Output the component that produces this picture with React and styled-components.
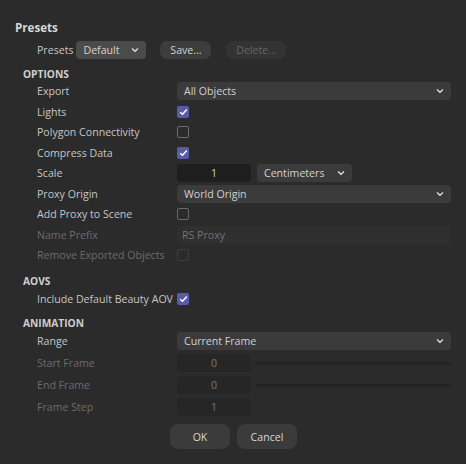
import React from 'react';
import styled, { createGlobalStyle } from 'styled-components';

const Global = createGlobalStyle`
  html, body {
    margin: 0;
    padding: 0;
    background: #2b2b2b;
  }
  body {
    font-family: "Open Sans", "Noto Sans", sans-serif;
    font-size: 10.6px;
    color: #c8c8c8;
  }
`;

const Dialog = styled.div`
  width: 466px;
  height: 464px;
  box-sizing: border-box;
  padding: 20px 15px 0 15px;
  display: flex;
  flex-direction: column;
`;

const Title = styled.div`
  font-weight: 700;
  font-size: 11.6px;
  color: #d6d6d6;
  height: 16px;
  line-height: 16px;
`;

const SectionHead = styled.div`
  font-weight: 700;
  font-size: 10.2px;
  color: #cfcfcf;
  margin-left: 8px;
  height: 14px;
  line-height: 14px;
  margin-top: ${p => p.top}px;
  margin-bottom: ${p => p.bottom}px;
`;

const Rows = styled.div`
  display: flex;
  flex-direction: column;
  gap: ${p => p.gap}px;
`;

const Row = styled.div`
  display: grid;
  grid-template-columns: 140px 1fr;
  align-items: center;
  height: 18px;
  padding-left: 22px;
`;

const Label = styled.div`
  color: ${p => (p.dim ? '#6c6c6c' : '#c6c6c6')};
  white-space: nowrap;
`;

const Control = styled.div`
  display: flex;
  align-items: center;
  gap: 6px;
  height: 18px;
`;

const Select = styled.div`
  display: flex;
  align-items: center;
  justify-content: space-between;
  box-sizing: border-box;
  height: 18px;
  width: ${p => p.width || '100%'};
  padding: 0 7px 0 7px;
  border-radius: 4px;
  background: ${p => p.bg || '#3b3b3b'};
  color: #d2d2d2;
`;

const Chevron = () => (
  <svg width="8" height="6" viewBox="0 0 8 6">
    <path d="M1 1.5 L4 4.3 L7 1.5" fill="none" stroke="#e0e0e0" strokeWidth="1.3" />
  </svg>
);

const Box = styled.div`
  box-sizing: border-box;
  width: 12px;
  height: 12px;
  border-radius: 2px;
  display: flex;
  align-items: center;
  justify-content: center;
  background: ${p => (p.checked ? '#5a5ba6' : 'transparent')};
  border: ${p => (p.checked ? 'none' : `1.5px solid ${p.dim ? '#3e3e3e' : '#6a6a6a'}`)};
`;

const Check = ({ checked, dim }) => (
  <Box checked={checked} dim={dim}>
    {checked && (
      <svg width="9" height="8" viewBox="0 0 9 8">
        <path d="M1.2 4.2 L3.5 6.2 L7.8 1.6" fill="none" stroke="#ffffff" strokeWidth="1.5" />
      </svg>
    )}
  </Box>
);

const NumField = styled.div`
  box-sizing: border-box;
  width: 74px;
  height: 18px;
  border-radius: 4px;
  background: ${p => (p.dim ? '#262626' : '#1e1e1e')};
  color: ${p => (p.dim ? '#777' : '#d0d0d0')};
  text-align: center;
  line-height: 18px;
`;

const TextField = styled.div`
  box-sizing: border-box;
  width: 100%;
  height: 18px;
  border-radius: 4px;
  background: #2f2f2f;
  color: #727272;
  padding-left: 5px;
  line-height: 18px;
`;

const Track = styled.div`
  flex: 1;
  height: 3px;
  border-radius: 2px;
  background: #232323;
  margin-left: -2px;
`;

const PresetRow = styled.div`
  display: flex;
  align-items: center;
  height: 18px;
  margin-top: 5px;
  padding-left: 22px;
`;

const PresetLabel = styled.div`
  margin-right: 3px;
  color: #c6c6c6;
`;

const Pill = styled.div`
  box-sizing: border-box;
  height: 18px;
  width: ${p => p.width}px;
  margin-left: ${p => p.gap || 0}px;
  border-radius: 7px;
  background: ${p => (p.disabled ? '#333333' : '#3d3d3d')};
  color: ${p => (p.disabled ? '#666' : '#d2d2d2')};
  display: flex;
  align-items: center;
  justify-content: center;
`;

const Footer = styled.div`
  display: flex;
  justify-content: center;
  gap: 7px;
  margin-top: 8px;
  padding-left: 1px;
`;

const Button = styled.div`
  width: 60px;
  height: 25px;
  border-radius: 8px;
  background: #3b3b3b;
  color: #d6d6d6;
  display: flex;
  align-items: center;
  justify-content: center;
`;

export default function App() {
  return (
    <Dialog>
      <Global />
      <Title>Presets</Title>
      <PresetRow>
        <PresetLabel>Presets</PresetLabel>
        <Select width="70px" bg="#4b4b4b">
          Default <Chevron />
        </Select>
        <Pill width={51} gap={14}>Save...</Pill>
        <Pill width={60} gap={15} disabled>Delete...</Pill>
      </PresetRow>

      <SectionHead top={8} bottom={1}>OPTIONS</SectionHead>
      <Rows gap={2.5}>
        <Row>
          <Label>Export</Label>
          <Control><Select>All Objects <Chevron /></Select></Control>
        </Row>
        <Row>
          <Label>Lights</Label>
          <Control><Check checked /></Control>
        </Row>
        <Row>
          <Label>Polygon Connectivity</Label>
          <Control><Check /></Control>
        </Row>
        <Row>
          <Label>Compress Data</Label>
          <Control><Check checked /></Control>
        </Row>
        <Row>
          <Label>Scale</Label>
          <Control>
            <NumField>1</NumField>
            <Select width="95px">Centimeters <Chevron /></Select>
          </Control>
        </Row>
        <Row>
          <Label>Proxy Origin</Label>
          <Control><Select>World Origin <Chevron /></Select></Control>
        </Row>
        <Row>
          <Label>Add Proxy to Scene</Label>
          <Control><Check /></Control>
        </Row>
        <Row>
          <Label dim>Name Prefix</Label>
          <Control><TextField>RS Proxy</TextField></Control>
        </Row>
        <Row>
          <Label dim>Remove Exported Objects</Label>
          <Control><Check dim /></Control>
        </Row>
      </Rows>

      <SectionHead top={10} bottom={2}>AOVS</SectionHead>
      <Rows gap={2.5}>
        <Row>
          <Label>Include Default Beauty AOV</Label>
          <Control><Check checked /></Control>
        </Row>
      </Rows>

      <SectionHead top={8} bottom={2}>ANIMATION</SectionHead>
      <Rows gap={4}>
        <Row>
          <Label>Range</Label>
          <Control><Select>Current Frame <Chevron /></Select></Control>
        </Row>
        <Row>
          <Label dim>Start Frame</Label>
          <Control><NumField dim>0</NumField><Track /></Control>
        </Row>
        <Row>
          <Label dim>End Frame</Label>
          <Control><NumField dim>0</NumField><Track /></Control>
        </Row>
        <Row>
          <Label dim>Frame Step</Label>
          <Control><NumField dim>1</NumField></Control>
        </Row>
      </Rows>

      <Footer>
        <Button>OK</Button>
        <Button>Cancel</Button>
      </Footer>
    </Dialog>
  );
}
